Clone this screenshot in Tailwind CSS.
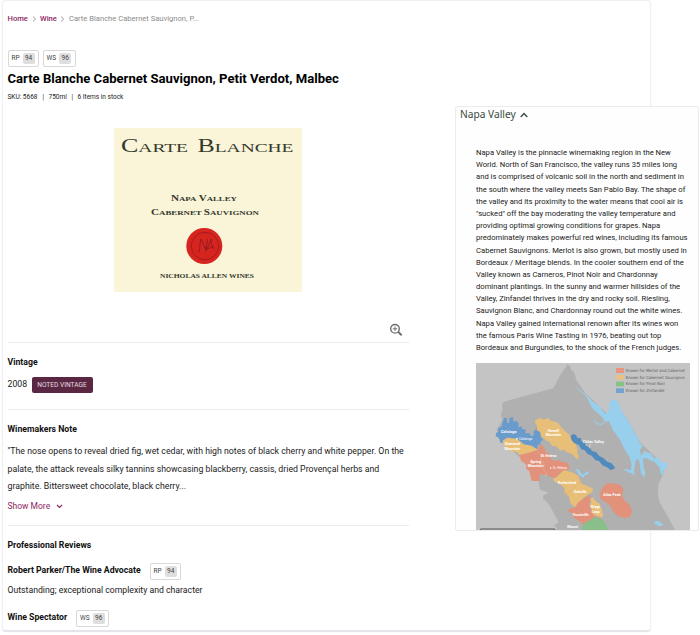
<!DOCTYPE html>
<html lang="en">
<head>
<meta charset="utf-8">
<title>Carte Blanche Cabernet Sauvignon</title>
<script src="https://cdn.jsdelivr.net/npm/@tailwindcss/browser@4"></script>
</head>
<body class="relative w-[700px] h-[635px] overflow-hidden bg-white text-[#222] font-['Roboto',sans-serif]">
<main class="ml-[2px] w-[649px] h-[632px] rounded-[4px] border border-[#f0f0f3] border-b-2 border-b-[#e4e4ea] bg-white shadow-[0_0_2px_rgba(0,0,0,0.05)] pl-[4.5px]">
  <div class="w-[401px] flex flex-col">
    <nav class="mt-[12px] h-[12px] flex items-center text-[7.6px] leading-[12px] whitespace-nowrap">
      <a class="w-[21px] font-medium text-[#8d2560]">Home</a>
      <svg class="ml-[3px] w-[5px] h-[6px]" viewBox="0 0 5 6" fill="none" stroke="#888" stroke-width=".8"><path d="M1 .6 3.7 3 1 5.4"/></svg>
      <a class="ml-[3.5px] w-[17px] font-medium text-[#8d2560]">Wine</a>
      <svg class="ml-[3px] w-[5px] h-[6px]" viewBox="0 0 5 6" fill="none" stroke="#888" stroke-width=".8"><path d="M1 .6 3.7 3 1 5.4"/></svg>
      <span class="ml-[4px] text-[#8b8b8b]">Carte Blanche Cabernet Sauvignon, P...</span>
    </nav>
    <div class="mt-[25px] flex gap-[4px] text-[6.5px] leading-[11px]">
      <div class="w-[31px] h-[17px] rounded-[2px] border border-[#d8d8d8] flex items-center pl-[3px] gap-[3px] text-[#444]"><span>RP</span><span class="w-[12px] h-[11px] rounded-[2px] bg-[#dedede] text-center">94</span></div>
      <div class="w-[33px] h-[17px] rounded-[2px] border border-[#d8d8d8] flex items-center pl-[3px] gap-[3px] text-[#444]"><span>WS</span><span class="w-[12px] h-[11px] rounded-[2px] bg-[#dedede] text-center">96</span></div>
    </div>
    <h1 class="mt-[3px] h-[18px] text-[13.1px] leading-[18px] font-bold text-black whitespace-nowrap">Carte Blanche Cabernet Sauvignon, Petit Verdot, Malbec</h1>
    <p class="mt-[4px] h-[10px] text-[6.5px] leading-[10px] text-[#222] whitespace-pre flex"><span class="w-[35px]">SKU: 5668</span><span class="w-[6px]">|</span><span class="w-[23px]">750ml</span><span class="w-[6px]">|</span><span>6 Items in stock</span></p>
    <svg class="mt-[26px] ml-[106.5px] w-[188px] h-[164px]" viewBox="0 0 188 164" font-family="'Liberation Serif', serif" fill="#343a2e">
      <rect width="188" height="164" fill="#faf4d8"/>
      <text x="7" y="24" font-size="18" textLength="67" lengthAdjust="spacingAndGlyphs">C<tspan font-size="13.5">ARTE</tspan></text>
      <text x="83.500" y="24" font-size="18" textLength="96" lengthAdjust="spacingAndGlyphs">B<tspan font-size="13.5">LANCHE</tspan></text>
      <text x="57" y="72.500" font-size="8.800" font-weight="bold" textLength="66" lengthAdjust="spacingAndGlyphs">N<tspan font-size="7">APA&#160;</tspan>V<tspan font-size="7">ALLEY</tspan></text>
      <text x="37" y="87" font-size="8.800" font-weight="bold" textLength="108" lengthAdjust="spacingAndGlyphs">C<tspan font-size="7">ABERNET </tspan>S<tspan font-size="7">AUVIGNON</tspan></text>
      <circle cx="90.300" cy="118" r="18" fill="#d6251f"/>
      <circle cx="91" cy="118" r="13.700" fill="none" stroke="#a01820" stroke-width=".9"/>
      <path d="M84 124c2 1 1.500-5 2-8l1-5c2 3 3 8 5 11l1.500-11M91 124c2-2 4-8 6-13 .5 4 .5 9 3 10M90 119c3 2.500 7 1 10-1" fill="none" stroke="#8c1a20" stroke-width=".9"/>
      <text x="46" y="150" font-size="6.500" font-weight="bold" textLength="94" lengthAdjust="spacingAndGlyphs">NICHOLAS ALLEN WINES</text>
    </svg>
    <div class="mt-[31px] h-[14px] flex justify-end pr-[6px]">
      <svg class="w-[14px] h-[14px]" viewBox="0 0 14 14" fill="none" stroke="#6e6e6e"><circle cx="6" cy="5.800" r="4.300" stroke-width="1.400"/><path d="M6 3.600v4.400M3.800 5.800h4.400" stroke-width="1"/><path d="M9.300 9 12.700 12.300" stroke-width="1.900"/></svg>
    </div>
    <div class="mt-[5px] h-px bg-[#ebebeb]"></div>
    <h2 class="mt-[13px] text-[8.7px] leading-[13px] font-bold text-[#111]">Vintage</h2>
    <div class="mt-[8px] h-[15px] flex items-center"><span class="w-[24px] text-[8.7px]">2008</span><span class="w-[61px] h-[16px] rounded-[2px] bg-[#592741] text-[#e8dbe2] text-[6.600px] leading-[16px] text-center whitespace-nowrap">NOTED VINTAGE</span></div>
    <div class="mt-[17px] h-px bg-[#ebebeb]"></div>
    <h2 class="mt-[13px] text-[8.7px] leading-[13px] font-bold text-[#111]">Winemakers Note</h2>
    <div class="mt-[7px] text-[8.750px] leading-[17.500px] whitespace-nowrap"><p>"The nose opens to reveal dried fig, wet cedar, with high notes of black cherry and white pepper. On the</p><p>palate, the attack reveals silky tannins showcasing blackberry, cassis, dried Provençal herbs and</p><p>graphite. Bittersweet chocolate, black cherry...</p></div>
    <div class="mt-[4px] h-[13px] flex items-center text-[8.5px] leading-[13px] text-[#8d2560]"><span class="w-[48px]">Show More</span><svg class="w-[7px] h-[5px]" viewBox="0 0 7 5" fill="none" stroke="#8d2560" stroke-width="1.100"><path d="m1 1 2.500 2.500L6 1"/></svg></div>
    <div class="mt-[12px] h-px bg-[#ebebeb]"></div>
    <h2 class="mt-[13px] text-[8.7px] leading-[13px] font-bold text-[#111]">Professional Reviews</h2>
    <div class="mt-[11px] h-[17px] flex items-center gap-[9px]"><h3 class="text-[8.7px] font-bold text-[#111] whitespace-nowrap">Robert Parker/The Wine Advocate</h3>
      <div class="w-[31px] h-[17px] rounded-[2px] border border-[#d8d8d8] flex items-center pl-[3px] gap-[3px] text-[6.500px] leading-[11px] text-[#444]"><span>RP</span><span class="w-[12px] h-[11px] rounded-[2px] bg-[#dedede] text-center">94</span></div></div>
    <p class="mt-[3px] text-[8.7px] leading-[14px]">Outstanding; exceptional complexity and character</p>
    <div class="mt-[13px] h-[17px] flex items-center gap-[9px]"><h3 class="text-[8.7px] font-bold text-[#111] whitespace-nowrap">Wine Spectator</h3>
      <div class="w-[33px] h-[17px] rounded-[2px] border border-[#d8d8d8] flex items-center pl-[3px] gap-[3px] text-[6.500px] leading-[11px] text-[#444]"><span>WS</span><span class="w-[12px] h-[11px] rounded-[2px] bg-[#dedede] text-center">96</span></div></div>
  </div>
</main>

<aside class="absolute left-[455px] top-[106px] w-[244px] h-[425px] rounded-[2px] border border-[#ececef] bg-[#fefefe] overflow-hidden">
  <div class="h-[15px] pl-[4px] flex items-center gap-[3px] font-['Noto_Sans',sans-serif] text-[10.2px] leading-[15px] text-[#3a4a40]"><span class="w-[57px] whitespace-nowrap">Napa Valley</span><svg class="w-[8px] h-[6px]" viewBox="0 0 8 6" fill="none" stroke="#3a4a40" stroke-width="1.400"><path d="M.7 5 4 1.600 7.300 5"/></svg></div>
  <div class="mt-[25px] ml-[20px] text-[7.650px] leading-[12.180px] text-[#222] whitespace-nowrap">
    <p>Napa Valley is the pinnacle winemaking region in the New</p><p>World. North of San Francisco, the valley runs 35 miles long</p><p>and is comprised of volcanic soil in the north and sediment in</p><p>the south where the valley meets San Pablo Bay. The shape of</p><p>the valley and its proximity to the water means that cool air is</p><p>"sucked" off the bay moderating the valley temperature and</p><p>providing optimal growing conditions for grapes. Napa</p><p>predominately makes powerful red wines, including its famous</p><p>Cabernet Sauvignons. Merlot is also grown, but mostly used in</p><p>Bordeaux / Meritage blends. In the cooler southern end of the</p><p>Valley known as Carneros, Pinot Noir and Chardonnay</p><p>dominant plantings. In the sunny and warmer hillsides of the</p><p>Valley, Zinfandel thrives in the dry and rocky soil. Riesling,</p><p>Sauvignon Blanc, and Chardonnay round out the white wines.</p><p>Napa Valley gained international renown after its wines won</p><p>the famous Paris Wine Tasting in 1976, beating out top</p><p>Bordeaux and Burgundies, to the shock of the French judges.</p>
  </div>
  <svg class="mt-[9px] ml-[20px] w-[214px] h-[167px]" viewBox="18 -110 642 501" preserveAspectRatio="none" font-family="Roboto, sans-serif">
    <rect x="18" y="-110" width="642" height="501" fill="#c4c4c4"/>
    <path fill="#b0b0b0" d="M293-107 302-97 304-88 310-85 316-72 318-60 330-43 345-20 412 42 430 0 470 55 510 128 582 196 581 220 565 255 564 290 570 310 596 355 615 391H256L262 385 252 378 266 367 254 345 240 320 230 307 218 296 222 285 236 279 210 270 205 240 150 172 92 126 80 90 97 60 92 45 98 30 96 15 102 6 250-34 270-72Z"/>
    <path d="m318-38 27 24 20 20 22 15 27 35M414 50l-5 15-15 9-15-2-4-12" fill="none" stroke="#98cfec" stroke-width="3"/>
    <path fill="#98cfec" d="m345-18 25 26 20 13 16 22 13-14-2-19 13-11 11 3 16 35 25 38 14 30 8 5 4 20 11 9-10 13 5 17 9-15 21 9 8 13 13-2 10 15 10-2 8 6-4 12-9 8 1 13-8-2-4-20-16-18-15-5-8-6-11 2 2 26 5 14-3 17-10-14-4-29-4-13-8 5-5 30 2 17-8-9-8-1-8-6-12-4 10-2 14 4 3-18-7-23-15-24-14-28-20-28-12-26-12 0-12-16-27-24ZM550 371l8-8 6 3 5-3 2 7 8 2-3 7-8-1-3 3-5-7Z"/>
    <path fill="#98cfec" d="m317 207 10 3 8 13 5 2 10-10 7 3-5 7-8 2-3 7-13-7Z"/>
    <path fill="#699bcc" d="m102 55 9 0 0 14 6 0 2-14 10-3 2 14 9-3 6 8-1 12 9-3 3 8 10 2-1 11 12 0 4 7 8 1 1-12 9-11 9-2 3 25 6 1-1 14-7 2 3 8-9 2-3 16-17-5-24-3-25-8-34-9-9 4-5-15-10-7 1-9 7-4 0-11 9-4Z"/>
    <path fill="#e8bf79" d="m98 123 13-9 28 3 14 9 8 8 24 4 12 8 8 5-26 10-30 5-9-9-19-2-15-13-5-7Z"/>
    <path fill="#e8bf79" d="m196 61 17-6 7 5 14-5 10 8 20 6 10 14 16 16 14 10 4 11 7 8 3 9 5 13-2 9 6 11-4 10-18-18-15-4-10-9-8 4-16-14-9 0-10-14-9-2-6-9-8 0-3-17-11-5 2-11-7-14Z"/>
    <path fill="#518abd" d="m301 109 9-6 8 3 4 8 11 2 1 9 11 2 2 12 12 4 7 11 12 3 10 12 11 5 13 12 13 5 11 14-13 7-12-9-14-6-9-12-12-4-11-13-12-5-9-11-10-3-8-14-13-4-8-9Z"/>
    <path fill="#e2917b" d="m147 167 29-8 29-9 7-18 10 10 6 17 11 3 4 17 14 5 8-3 10 6 15 1 8 11-2 12-17 2-24 23-27-10-10-2-10 3 1 17-24 0-7-29-9-7-1-14-14-10Z"/>
    <path d="m203 155 11 13-1 15 9 7 0 24 7 4 0 9-7 1" fill="none" stroke="#f7c5b4" stroke-width="1.500" stroke-dasharray="3 2"/>
    <path fill="#e8bf79" d="m249 237 10-4 23-22 28 8 15 10 8 22 19 8 18 8-4 11-24 15-13 15-13 16-14-13-5-19-14-16 2-8-17-17-14-3Z"/>
    <path d="m276 286 28-13 25-27" fill="none" stroke="#d8ad70" stroke-width="1.500"/>
    <path fill="#e2917b" d="m326 306 32-20 5 12-5 12 3 17 14 14 2 10 22 8-22 7-37 11-13-13-15-10-8-15-14-8 25-8Z"/>
    <path fill="#e8bf79" d="m360 298 9-5 10 14 12 5-2 11 8 6-1 10 5 5-5 10-15-6-10-2-5-17-7-9 5-14Z"/>
    <path fill="#e2917b" d="M389 281 399 262 413 250 432 252 451 256 460 268 456 288 465 304 479 316 486 335 480 351 466 356 445 350 430 336 420 317 405 306 390 296Z"/>
    <path fill="#89bf89" d="m338 377 8-10 15-5 13-10 20 6 12 11 8 22h-77Z"/>
    <g fill="#fff" font-size="12" font-weight="bold" text-anchor="middle">
      <text x="116" y="100" textLength="46" lengthAdjust="spacingAndGlyphs">Calistoga</text><text x="127" y="137" textLength="46" lengthAdjust="spacingAndGlyphs">Diamond</text><text x="127" y="150" textLength="47" lengthAdjust="spacingAndGlyphs">Mountain</text>
      <text x="250" y="96" textLength="34" lengthAdjust="spacingAndGlyphs">Howell</text><text x="250" y="110" textLength="46" lengthAdjust="spacingAndGlyphs">Mountain</text><text x="370" y="129" textLength="63" lengthAdjust="spacingAndGlyphs">Chiles Valley</text>
      <text x="236" y="171" textLength="47" lengthAdjust="spacingAndGlyphs">St Helena</text><text x="197" y="189" textLength="33" lengthAdjust="spacingAndGlyphs">Spring</text><text x="197" y="202" textLength="47" lengthAdjust="spacingAndGlyphs">Mountain</text>
      <text x="291" y="253" textLength="55" lengthAdjust="spacingAndGlyphs">Rutherford</text><text x="331" y="279" textLength="39" lengthAdjust="spacingAndGlyphs">Oakville</text><text x="426" y="290" textLength="52" lengthAdjust="spacingAndGlyphs">Atlas Peak</text>
      <text x="332" y="350" textLength="49" lengthAdjust="spacingAndGlyphs">Yountville</text><text x="377" y="326" textLength="29" lengthAdjust="spacingAndGlyphs">Stags</text><text x="377" y="340" textLength="24" lengthAdjust="spacingAndGlyphs">Leap</text><text x="308" y="385" textLength="33" lengthAdjust="spacingAndGlyphs">Mount</text>
      <text x="308" y="399" textLength="33" lengthAdjust="spacingAndGlyphs">Veeder</text><text x="380" y="399" textLength="48" lengthAdjust="spacingAndGlyphs">Oak Knoll</text>
    </g>
    <g fill="#fff" font-size="10.500"><text x="147" y="120" textLength="40" lengthAdjust="spacingAndGlyphs">Calistoga</text><text x="248" y="209" textLength="43" lengthAdjust="spacingAndGlyphs">St. Helena</text><circle cx="141" cy="117" r="2.500"/><circle cx="242" cy="205" r="2.500"/></g>
    <path d="m361 132-3 14" stroke="#fff" stroke-width="1.500"/>
    <path fill="#e8957f" d="M438-95h24v15h-24z"/><path fill="#e8c283" d="M438-74h24v14h-24z"/><path fill="#86c286" d="M438-54h24v14h-24z"/><path fill="#74a3d0" d="M438-34h24v14h-24z"/>
    <g fill="#5e5e5e" font-size="12.500" font-family="'DejaVu Sans', sans-serif"><text x="467" y="-84" textLength="178" lengthAdjust="spacingAndGlyphs">Known for Merlot and Cabernet</text><text x="467" y="-63" textLength="178" lengthAdjust="spacingAndGlyphs">Known for Cabernet Sauvignon</text><text x="467" y="-43" textLength="118" lengthAdjust="spacingAndGlyphs">Known for Pinot Noir</text><text x="467" y="-23" textLength="116" lengthAdjust="spacingAndGlyphs">Known for Zinfandel</text></g>
    <path d="M32 391v-3h222v3" fill="none" stroke="#555" stroke-width="3"/>
  </svg>
</aside>
</body>
</html>
